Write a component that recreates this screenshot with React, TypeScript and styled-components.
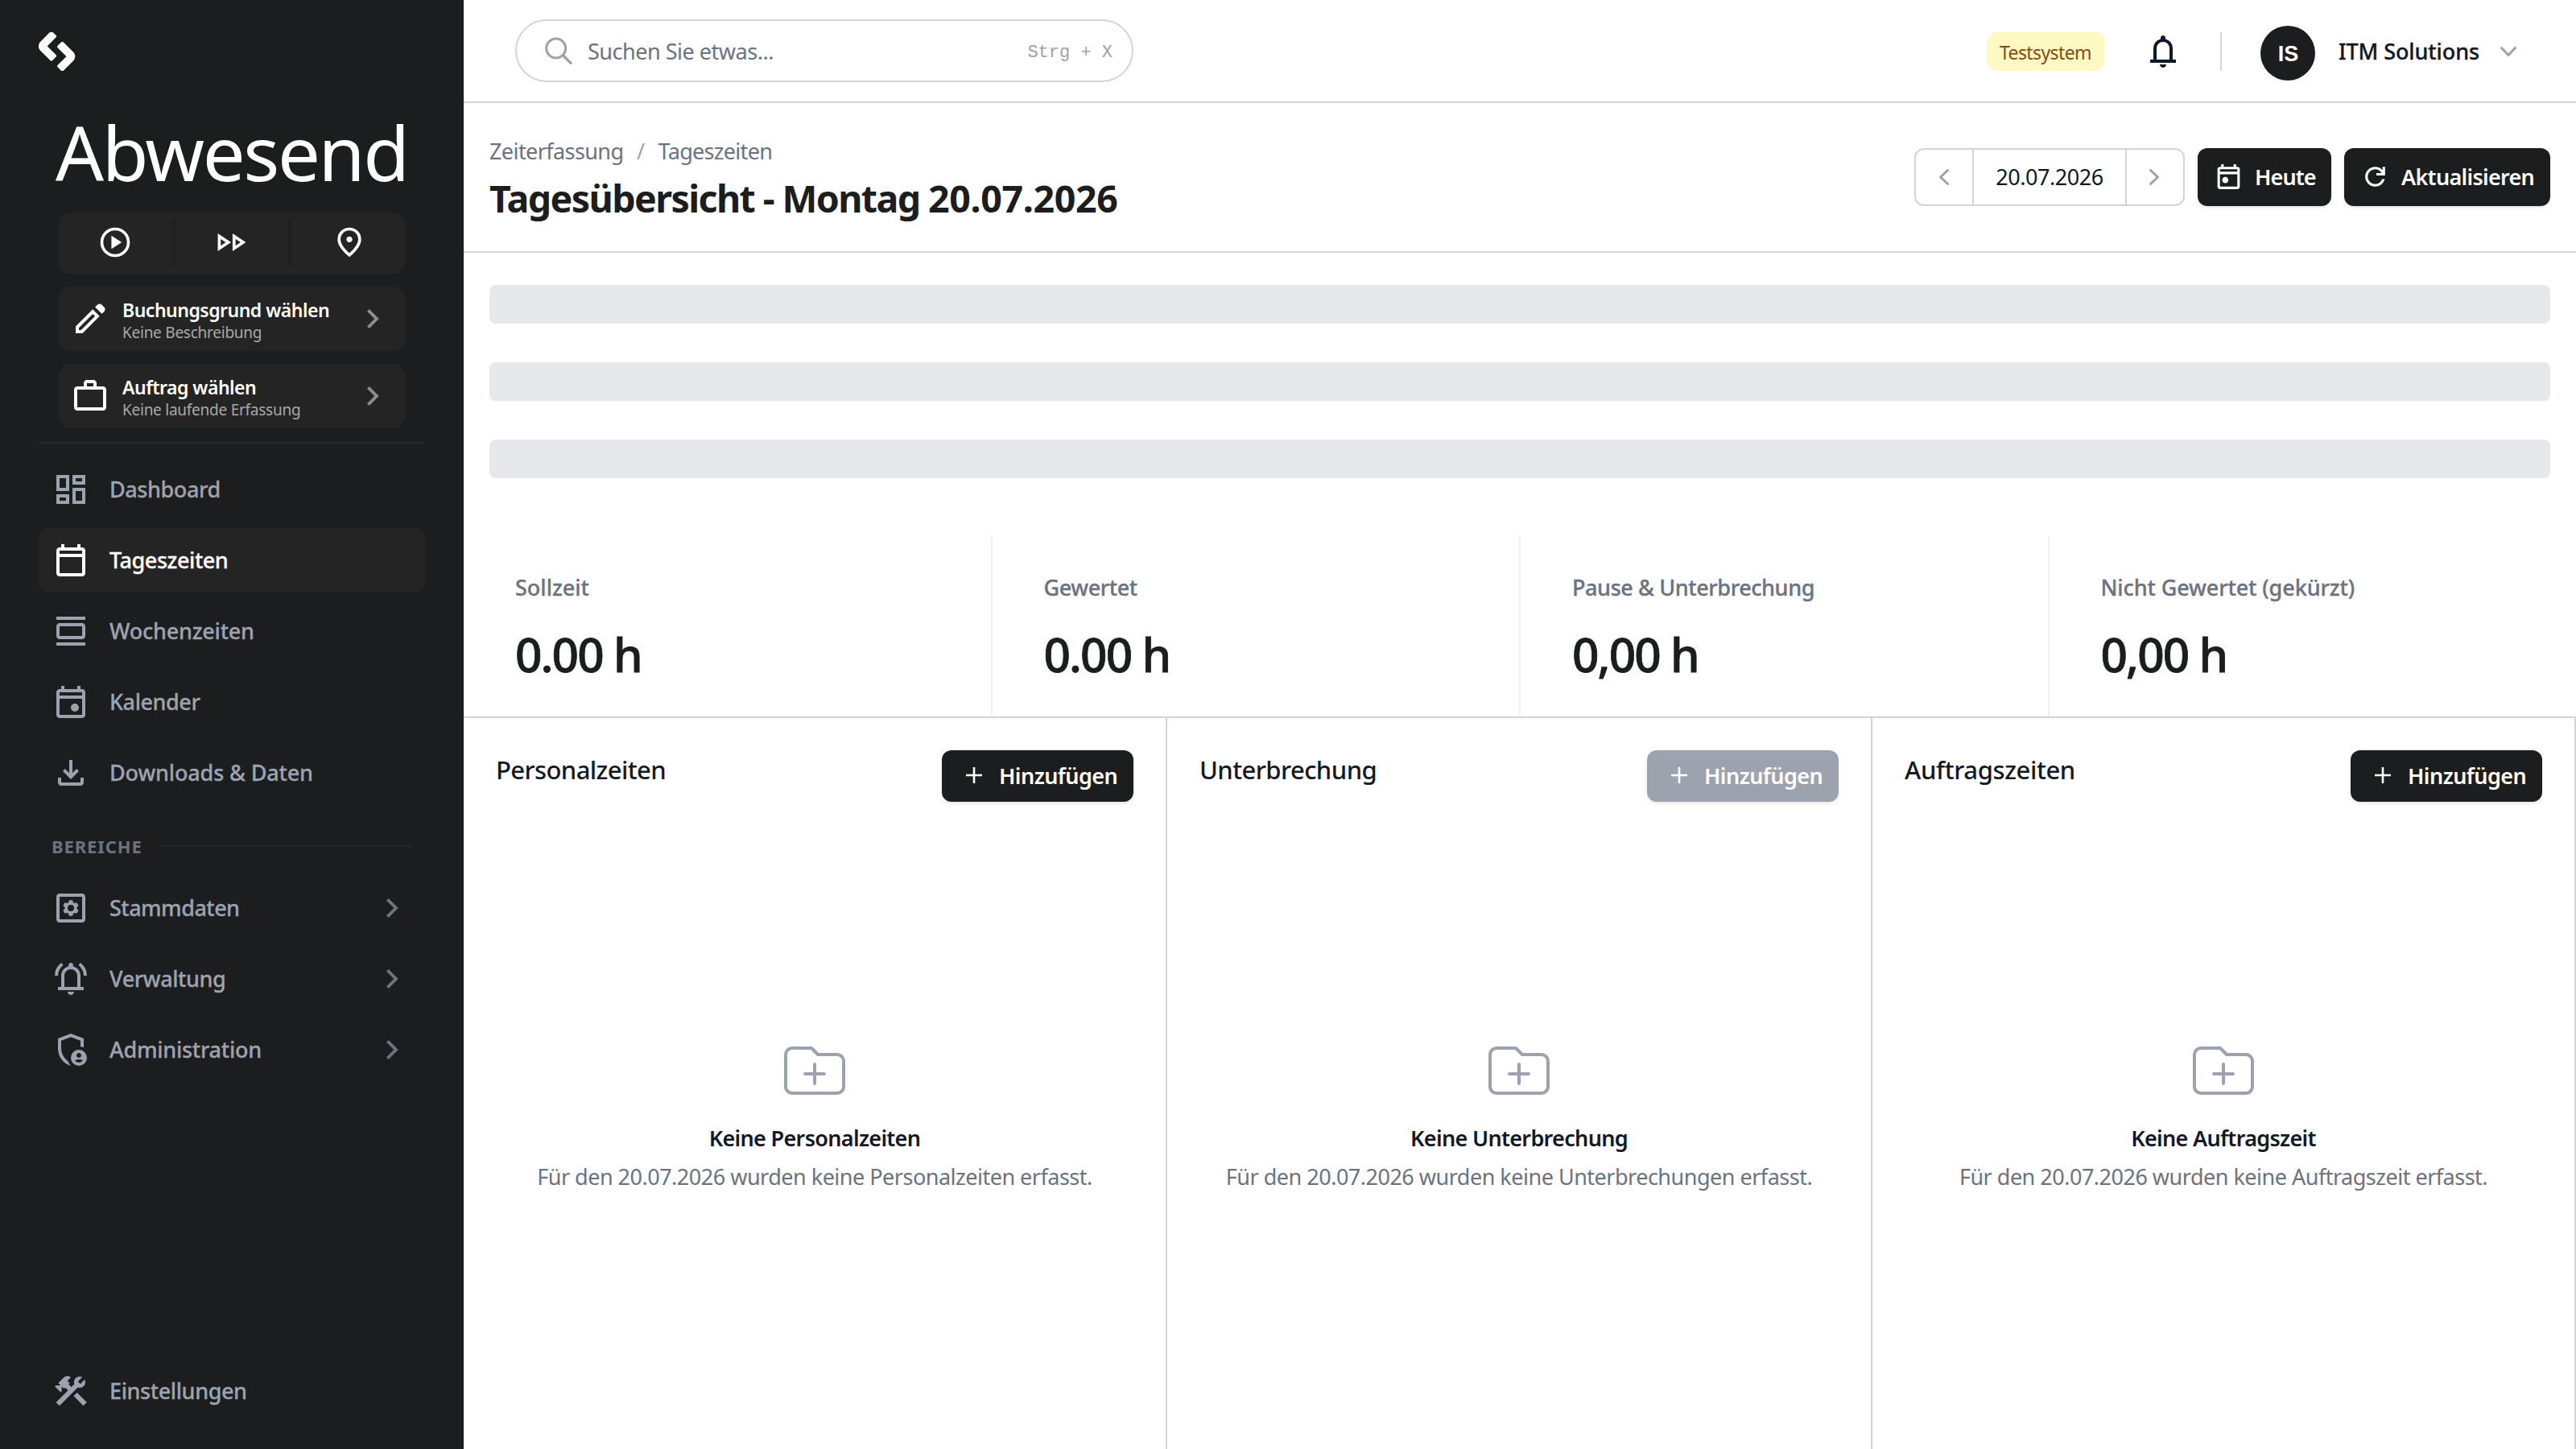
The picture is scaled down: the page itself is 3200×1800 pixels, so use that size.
import React from "react";
import styled, { createGlobalStyle, css } from "styled-components";
import { MdConstruction, MdOutlineDashboard } from "react-icons/md";

const ink = "#1b1d1e";
const panel = "#242424";
const line = "#d4d4d8";
const muted = "#9ca3af";
const body = "#6b7280";
const text = "#111827";

const GlobalStyle = createGlobalStyle`
  * { box-sizing: border-box; }
  body {
    margin: 0;
    background: #fff;
    color: ${text};
    font-family: "Noto Sans", "Open Sans", sans-serif;
    font-size: 27px;
    line-height: 40px;
  }
  svg { display: block; flex: none; }
`;

/* ---------- icons ---------- */

const icons = {
  day: "M5 22q-.825 0-1.413-.587Q3 20.825 3 20V6q0-.825.587-1.412Q4.175 4 5 4h1V2h2v2h8V2h2v2h1q.825 0 1.413.588Q21 5.175 21 6v14q0 .825-.587 1.413Q19.825 22 19 22Zm0-2h14V10H5v10ZM5 8h14V6H5v2Z",
  event:
    "M14.5 18q-1.05 0-1.775-.725Q12 16.55 12 15.5q0-1.05.725-1.775Q13.45 13 14.5 13q1.05 0 1.775.725Q17 14.45 17 15.5q0 1.05-.725 1.775Q15.55 18 14.5 18ZM5 22q-.825 0-1.413-.587Q3 20.825 3 20V6q0-.825.587-1.412Q4.175 4 5 4h1V2h2v2h8V2h2v2h1q.825 0 1.413.588Q21 5.175 21 6v14q0 .825-.587 1.413Q19.825 22 19 22Zm0-2h14V10H5v10ZM5 8h14V6H5v2Z",
  today:
    "M9.3 17.2q-1.05 0-1.775-.725Q6.8 15.75 6.8 14.7q0-1.05.725-1.775Q8.25 12.2 9.3 12.2q1.05 0 1.775.725.725.725.725 1.775 0 1.05-.725 1.775-.725.725-1.775.725ZM5 22q-.825 0-1.413-.587Q3 20.825 3 20V6q0-.825.587-1.412Q4.175 4 5 4h1V2h2v2h8V2h2v2h1q.825 0 1.413.588Q21 5.175 21 6v14q0 .825-.587 1.413Q19.825 22 19 22Zm0-2h14V10H5v10ZM5 8h14V6H5v2Z",
  week: "M3 5V3h18v2Zm0 16v-2h18v2Zm2-4q-.825 0-1.413-.587Q3 15.825 3 15V9q0-.825.587-1.412Q4.175 7 5 7h14q.825 0 1.413.588Q21 8.175 21 9v6q0 .825-.587 1.413Q19.825 17 19 17Zm0-2h14V9H5v6Z",
  download:
    "M12 16 7 11l1.4-1.45 2.6 2.6V4h2v8.15l2.6-2.6L17 11ZM6 20q-.825 0-1.413-.587Q4 18.825 4 18v-3h2v3h12v-3h2v3q0 .825-.587 1.413Q18.825 20 18 20Z",
  bell: "M4 19v-2h2v-7q0-2.075 1.25-3.688Q8.5 4.7 10.5 4.2v-.7q0-.625.438-1.062Q11.375 2 12 2t1.062.438q.438.437.438 1.062v.7q2 .5 3.25 2.112Q18 7.925 18 10v7h2v2Zm8 3q-.825 0-1.412-.587Q10 20.825 10 20h4q0 .825-.587 1.413Q12.825 22 12 22Zm-4-5h8v-7q0-1.65-1.175-2.825Q13.65 6 12 6q-1.65 0-2.825 1.175Q8 8.35 8 10Z",
  bellActive:
    "M2 10q0-2.5 1.113-4.588Q4.225 3.325 6.1 1.95l1.175 1.6q-1.5 1.1-2.387 2.775Q4 8 4 10Zm18 0q0-2-.887-3.675-.888-1.675-2.388-2.775l1.175-1.6q1.875 1.375 2.988 3.462Q22 7.5 22 10ZM4 19v-2h2v-7q0-2.075 1.25-3.688Q8.5 4.7 10.5 4.2v-.7q0-.625.438-1.062Q11.375 2 12 2t1.062.438q.438.437.438 1.062v.7q2 .5 3.25 2.112Q18 7.925 18 10v7h2v2Zm8 3q-.825 0-1.412-.587Q10 20.825 10 20h4q0 .825-.587 1.413Q12.825 22 12 22Zm-4-5h8v-7q0-1.65-1.175-2.825Q13.65 6 12 6q-1.65 0-2.825 1.175Q8 8.35 8 10Z",
  admin:
    "M17 17q.625 0 1.062-.438.438-.437.438-1.062t-.438-1.062Q17.625 14 17 14t-1.062.438q-.438.437-.438 1.062t.438 1.062Q16.375 17 17 17Zm0 3q.775 0 1.425-.363.65-.362 1.05-.962-.55-.325-1.175-.5T17 18t-1.3.175q-.625.175-1.175.5.4.6 1.05.962Q16.225 20 17 20Zm-5 2q-3.475-.875-5.737-3.988Q4 14.9 4 11.1V5l8-3 8 3v5.675q-.475-.2-.975-.363-.5-.162-1.025-.237V6.4l-6-2.25L6 6.4v4.7q0 1.175.312 2.337.313 1.163.875 2.238.563 1.075 1.363 1.987.8.913 1.775 1.538.275.8.725 1.525.45.725 1.025 1.275-.025 0-.038.013Q12.025 22 12 22Zm5 0q-2.075 0-3.537-1.462Q12 19.075 12 17q0-2.075 1.463-3.538Q14.925 12 17 12t3.538 1.462Q22 14.925 22 17q0 2.075-1.462 3.538Q19.075 22 17 22Z",
  play: "m9.5 16.5 7-4.5-7-4.5ZM12 22q-2.075 0-3.9-.788-1.825-.787-3.175-2.137-1.35-1.35-2.137-3.175Q2 14.075 2 12t.788-3.9q.787-1.825 2.137-3.175 1.35-1.35 3.175-2.138Q9.925 2 12 2t3.9.787q1.825.788 3.175 2.138 1.35 1.35 2.137 3.175Q22 9.925 22 12t-.788 3.9q-.787 1.825-2.137 3.175-1.35 1.35-3.175 2.137Q14.075 22 12 22Zm0-2q3.35 0 5.675-2.325Q20 15.35 20 12q0-3.35-2.325-5.675Q15.35 4 12 4 8.65 4 6.325 6.325 4 8.65 4 12q0 3.35 2.325 5.675Q8.65 20 12 20Z",
  forward: "M2.5 18V6l9 6Zm10 0V6l9 6Zm-8-3.75L7.9 12 4.5 9.75Zm10 0L17.9 12l-3.4-2.25Z",
  pin: "M12 12q.825 0 1.413-.588Q14 10.825 14 10t-.587-1.413Q12.825 8 12 8q-.825 0-1.412.587Q10 9.175 10 10q0 .825.588 1.412Q11.175 12 12 12Zm0 7.35q3.05-2.8 4.525-5.088Q18 11.975 18 10.2q0-2.725-1.738-4.463Q14.525 4 12 4 9.475 4 7.737 5.737 6 7.475 6 10.2q0 1.775 1.475 4.062Q8.95 16.55 12 19.35ZM12 22q-4.025-3.425-6.012-6.363Q4 12.7 4 10.2q0-3.75 2.413-5.975Q8.825 2 12 2t5.587 2.225Q20 6.45 20 10.2q0 2.5-1.987 5.437Q16.025 18.575 12 22Z",
  edit: "M5 19h1.4l8.625-8.625-1.4-1.4L5 17.6ZM19.3 8.925l-4.25-4.2 1.4-1.4q.575-.575 1.413-.575.837 0 1.412.575l1.4 1.4q.575.575.6 1.388.025.812-.55 1.387ZM17.85 10.4 7.25 21H3v-4.25l10.6-10.6Z",
  work: "M4 21q-.825 0-1.412-.587Q2 19.825 2 19V8q0-.825.588-1.412Q3.175 6 4 6h4V4q0-.825.588-1.413Q9.175 2 10 2h4q.825 0 1.413.587Q16 3.175 16 4v2h4q.825 0 1.413.588Q22 7.175 22 8v11q0 .825-.587 1.413Q20.825 21 20 21Zm0-2h16V8H4v11Zm6-13h4V4h-4Z",
  chevron: "M9.4 18 8 16.6l4.6-4.6L8 7.4 9.4 6l6 6Z",
  refresh:
    "M12 20q-3.35 0-5.675-2.325T4 12t2.325-5.675T12 4q1.725 0 3.3.713T18 6.75V4h2v7h-7V9h4.2q-.8-1.4-2.187-2.2T12 6Q9.5 6 7.75 7.75T6 12t1.75 4.25T12 18q1.925 0 3.475-1.1T17.65 14h2.1q-.7 2.65-2.85 4.325T12 20",
};

type IconName = keyof typeof icons;

const Icon = ({ name, size = 48 }: { name: IconName; size?: number }) => (
  <svg width={size} height={size} viewBox="0 0 24 24" fill="currentColor">
    <path fillRule="evenodd" d={icons[name]} />
  </svg>
);

/* Six-toothed gear outline centred on (12, 12). */
const gear =
  "M" +
  Array.from({ length: 6 }, (_, k) =>
    [
      [-24, 3.75],
      [-12, 5],
      [12, 5],
      [24, 3.75],
    ]
      .map(([offset, r]) => {
        const a = ((k * 60 + offset) * Math.PI) / 180;
        return `${(12 + r * Math.sin(a)).toFixed(2)} ${(12 - r * Math.cos(a)).toFixed(2)}`;
      })
      .join("L")
  ).join("L") +
  "Z";

const MasterDataIcon = () => (
  <svg width={48} height={48} viewBox="0 0 24 24" fill="currentColor">
    <path
      fillRule="evenodd"
      d="M5 21q-.825 0-1.413-.587Q3 19.825 3 19V5q0-.825.587-1.413Q4.175 3 5 3h14q.825 0 1.413.587Q21 4.175 21 5v14q0 .825-.587 1.413Q19.825 21 19 21Zm0-2h14V5H5Z"
    />
    <path fillRule="evenodd" d={`${gear}M12 10a2 2 0 100 4 2 2 0 000-4Z`} />
  </svg>
);

const arrows = {
  down: "M5.23 7.21a.75.75 0 011.06.02L10 11.168l3.71-3.938a.75.75 0 111.08 1.04l-4.25 4.5a.75.75 0 01-1.08 0l-4.25-4.5a.75.75 0 01.02-1.06z",
  left: "M12.79 5.23a.75.75 0 01-.02 1.06L8.832 10l3.938 3.71a.75.75 0 11-1.04 1.08l-4.5-4.25a.75.75 0 010-1.08l4.5-4.25a.75.75 0 011.06.02z",
  right:
    "M7.21 14.77a.75.75 0 01.02-1.06L11.168 10 7.23 6.29a.75.75 0 111.04-1.08l4.5 4.25a.75.75 0 010 1.08l-4.5 4.25a.75.75 0 01-1.06-.02z",
};

const Arrow = ({ to }: { to: keyof typeof arrows }) => (
  <svg width={40} height={40} viewBox="0 0 20 20" fill={muted}>
    <path fillRule="evenodd" clipRule="evenodd" d={arrows[to]} />
  </svg>
);

const Logo = () => {
  const half = "M15.8 1 20 5.2 7.9 17.3 20 29.4 15.8 33.6 3.2 21Q.6 17.3 3.2 13.6Z";
  return (
    <svg width={46} height={48} viewBox="0 0 46 48">
      <g fill="#fff" stroke="#fff" strokeWidth={4} strokeLinejoin="round">
        <path d={half} />
        <path d={half} transform="rotate(180 22.6 23.7)" />
      </g>
    </svg>
  );
};

const SearchIcon = () => (
  <svg width={40} height={40} viewBox="0 0 40 40" fill="none" stroke={muted}>
    <circle cx={18.7} cy={17} r={12} strokeWidth={3} />
    <path d="M28.4 26.8 37 35.4" strokeWidth={3.4} strokeLinecap="round" />
  </svg>
);

const PlusIcon = () => (
  <svg width={22} height={22} viewBox="0 0 22 22" stroke="currentColor" strokeWidth={2.6}>
    <path d="M11 1v20M1 11h20" />
  </svg>
);

const FolderPlus = () => (
  <svg width={96} height={96} viewBox="0 0 24 24" fill="none" stroke={muted} strokeWidth={1}>
    <path
      strokeLinecap="round"
      strokeLinejoin="round"
      d="M9 13h6m-3-3v6m-9 1V7a2 2 0 012-2h6l2 2h6a2 2 0 012 2v8a2 2 0 01-2 2H5a2 2 0 01-2-2z"
    />
  </svg>
);

/* ---------- shared ---------- */

const Label = styled.span<{ $track?: number }>`
  letter-spacing: ${(p) => p.$track ?? 0}px;
  white-space: nowrap;
`;

const Page = styled.div`
  display: grid;
  grid-template-columns: 576px 1fr;
  width: 3200px;
  height: 1800px;
  overflow: hidden;
`;

/* ---------- sidebar ---------- */

const Sidebar = styled.aside`
  display: flex;
  flex-direction: column;
  padding: 40px 48px 32px;
  background: ${ink};
  color: ${muted};
`;

const Terminal = styled.section`
  display: flex;
  flex-direction: column;
  gap: 16px;
  margin-top: 53px;
  padding: 0 24px 16px;
  color: #fff;
`;

const Status = styled.div`
  margin: 0 0 11px -3px;
  font-size: 94px;
  line-height: 96px;
  letter-spacing: -2.4px;
  white-space: nowrap;
`;

const Controls = styled.div`
  display: grid;
  grid-template-columns: 142px 144px 1fr;
  height: 76px;
  padding: 8px 0 10px;
  border-radius: 16px;
  background: ${panel};
`;

const Control = styled.button`
  display: flex;
  align-items: center;
  justify-content: center;
  padding: 0;
  border: 0;
  background: none;
  color: #fff;

  & + & {
    border-left: 4px solid #1f2020;
  }

  &:last-child {
    padding-left: 2px;
  }
`;

const Picker = styled.button`
  display: flex;
  align-items: center;
  gap: 16px;
  height: 80px;
  padding: 0 16px;
  border: 0;
  border-radius: 16px;
  background: ${panel};
  color: #fff;
  font-family: inherit;
  text-align: left;

  svg:last-child {
    color: #8c8c8c;
  }
`;

const PickerText = styled.span`
  display: flex;
  flex: 1;
  flex-direction: column;
  padding-top: 3px;
`;

const PickerTitle = styled.span`
  font-size: 23px;
  font-weight: 600;
  line-height: 30px;
  letter-spacing: -0.5px;
`;

const PickerHint = styled.span`
  color: #a9a9a9;
  font-size: 19px;
  line-height: 26px;
  letter-spacing: -0.25px;
`;

const Divider = styled.hr`
  width: 100%;
  height: 4px;
  margin: 0;
  border: 0;
  background: #242526;
`;

const Nav = styled.nav<{ $top?: number }>`
  display: flex;
  flex-direction: column;
  gap: 8px;
  margin-top: ${(p) => p.$top ?? 0}px;
`;

const NavItem = styled.a<{ $active?: boolean }>`
  display: flex;
  align-items: center;
  gap: 24px;
  height: 80px;
  padding: 0 16px;
  border-radius: 12px;
  font-weight: 500;

  ${Label} {
    flex: 1;
    -webkit-text-stroke: 0.3px currentColor;
  }

  svg:nth-child(3) {
    color: ${body};
  }

  ${(p) =>
    p.$active &&
    css`
      background: ${panel};
      color: #fff;
    `}
`;

const SectionTitle = styled.div`
  display: flex;
  align-items: center;
  gap: 19px;
  margin-top: 31px;
  padding: 0 16px;
  color: ${body};
  font-size: 22px;
  font-weight: 700;
  letter-spacing: 0.9px;

  &::after {
    content: "";
    flex: 1;
    height: 2px;
    background: #242526;
  }
`;

const Spacer = styled.div`
  flex: 1;
`;

/* ---------- main ---------- */

const Main = styled.main`
  display: flex;
  flex-direction: column;
  min-width: 0;
`;

const TopBar = styled.header`
  display: flex;
  align-items: center;
  height: 128px;
  padding: 0 64px;
  border-bottom: 2px solid ${line};
`;

const Search = styled.div`
  display: flex;
  align-items: center;
  width: 768px;
  height: 78px;
  padding: 0 24px 0 30px;
  border: 2px solid ${line};
  border-radius: 39px;
  color: ${body};

  ${Label} {
    flex: 1;
    margin: 2px 0 0 18px;
  }
`;

const Shortcut = styled.kbd`
  margin-top: 5px;
  color: ${muted};
  font: 22px/40px "Liberation Mono", monospace;
`;

const Account = styled.div`
  display: flex;
  align-items: center;
  height: 72px;
  padding-top: 2px;
  margin-left: auto;
`;

const Badge = styled.span`
  display: flex;
  align-items: center;
  width: 146px;
  height: 48px;
  padding: 2px 0 0 16px;
  margin-right: 49px;
  border-radius: 12px;
  background: #fef9c3;
  color: #854d0e;
  font-size: 23px;
`;

const Separator = styled.span`
  width: 2px;
  height: 48px;
  margin: 0 48px 0 47px;
  background: ${line};
`;

const Avatar = styled.span`
  display: flex;
  align-items: center;
  justify-content: center;
  width: 68px;
  height: 68px;
  padding: 2px 0 0 1px;
  margin: 4px 29px 0 0;
  border-radius: 50%;
  background: ${ink};
  color: #fff;
  font: bold 27px/40px "Liberation Sans", sans-serif;
`;

const UserName = styled.span`
  width: 191px;
  font-weight: 500;
  letter-spacing: -0.1px;
  -webkit-text-stroke: 0.3px currentColor;
`;

const PageHeader = styled.div`
  display: flex;
  align-items: center;
  justify-content: space-between;
  height: 186px;
  padding: 0 32px;
  border-bottom: 2px solid ${line};
`;

const Heading = styled.div`
  padding-bottom: 4px;
  margin-top: 16px;
`;

const Breadcrumb = styled.div`
  display: flex;
  color: ${body};
  gap: 16.5px;
`;

const Slash = styled.span`
  color: ${muted};
`;

const Title = styled.h1`
  margin: 0;
  color: ${ink};
  font-size: 46.5px;
  font-weight: 700;
  line-height: 76px;
`;

const Actions = styled.div`
  display: flex;
  gap: 16px;
`;

const DateSwitch = styled.div`
  display: grid;
  grid-template-columns: 70px 190px 72px;
  height: 72px;
  border: 2px solid ${line};
  border-radius: 12px;
`;

const DateCell = styled.span`
  display: flex;
  align-items: center;
  justify-content: center;

  & + & {
    border-left: 2px solid ${line};
  }

  &:last-child {
    padding-right: 2px;
  }
`;

const Button = styled.button<{ $width: number; $small?: boolean; $disabled?: boolean }>`
  display: flex;
  align-items: center;
  width: ${(p) => p.$width}px;
  height: ${(p) => (p.$small ? 64 : 72)}px;
  gap: ${(p) => (p.$small ? 20 : 14)}px;
  padding: 0 0 2px ${(p) => (p.$small ? 29 : 20)}px;
  border: 0;
  border-radius: 12px;
  background: ${(p) => (p.$disabled ? muted : ink)};
  box-shadow: 0 2px 4px rgba(0, 0, 0, 0.1);
  color: #fff;
  font: 600 27px/40px "Noto Sans", sans-serif;

  ${Label} {
    padding-top: 2px;
  }
`;

const Skeletons = styled.div`
  display: flex;
  flex-direction: column;
  gap: 48px;
  padding: 40px 32px 72px;
`;

const Skeleton = styled.div`
  height: 48px;
  border-radius: 8px;
  background: #e6e8eb;
`;

const Stats = styled.div`
  display: grid;
  grid-template-columns: repeat(4, 1fr);
  gap: 2px;
  height: 226px;
  border-bottom: 2px solid ${line};
  background: #f0f0f2;
`;

const Stat = styled.div`
  padding: 44px 64px 0;
  background: #fff;
  color: ${body};
  font-weight: 500;
  -webkit-text-stroke: 0.3px currentColor;
`;

const StatValue = styled.div`
  margin-top: 22px;
  color: ${ink};
  font-size: 58.5px;
  font-weight: 500;
  line-height: 80px;
  letter-spacing: -1.9px;
  -webkit-text-stroke: 0.8px currentColor;
`;

const Columns = styled.div`
  display: grid;
  flex: 1;
  grid-template-columns: 874px 876px 874px;
`;

const Column = styled.section`
  border-right: 2px solid ${line};
`;

const ColumnHeader = styled.div`
  display: flex;
  align-items: flex-start;
  justify-content: space-between;
  padding: 40px 40px 0;
`;

const ColumnTitle = styled.h2`
  margin: 0;
  font-size: 31px;
  font-weight: 500;
  line-height: 48px;
`;

const Empty = styled.div`
  display: flex;
  flex-direction: column;
  align-items: center;
  margin-top: 286px;
`;

const EmptyTitle = styled.h3`
  margin: 16px 0 8px;
  font-size: 27px;
  font-weight: 600;
  letter-spacing: -0.68px;
`;

const EmptyText = styled.p`
  margin: 0;
  color: ${body};
  letter-spacing: -0.5px;
`;

/* ---------- data ---------- */

const mainNav = [
  { label: "Dashboard", track: -0.42, icon: <MdOutlineDashboard size={48} /> },
  { label: "Tageszeiten", track: -0.45, icon: <Icon name="day" />, active: true },
  { label: "Wochenzeiten", track: -0.22, icon: <Icon name="week" /> },
  { label: "Kalender", track: -0.44, icon: <Icon name="event" /> },
  { label: "Downloads & Daten", track: -0.15, icon: <Icon name="download" /> },
];

const areaNav = [
  { label: "Stammdaten", track: -0.52, icon: <MasterDataIcon /> },
  { label: "Verwaltung", track: -0.4, icon: <Icon name="bellActive" /> },
  { label: "Administration", track: -0.25, icon: <Icon name="admin" /> },
];

const stats = [
  { label: "Sollzeit", track: 0, value: "0.00 h" },
  { label: "Gewertet", track: -0.4, value: "0.00 h" },
  { label: "Pause & Unterbrechung", track: -0.4, value: "0,00 h" },
  { label: "Nicht Gewertet (gekürzt)", track: -0.1, value: "0,00 h" },
];

const columns = [
  { title: "Personalzeiten", track: -0.6, empty: "Keine Personalzeiten", noun: "Personalzeiten" },
  { title: "Unterbrechung", track: -0.55, empty: "Keine Unterbrechung", noun: "Unterbrechungen", disabled: true },
  { title: "Auftragszeiten", track: -0.38, empty: "Keine Auftragszeit", noun: "Auftragszeit" },
];

export default function App() {
  return (
    <Page>
      <GlobalStyle />
      <Sidebar>
        <Logo />
        <Terminal>
          <Status>Abwesend</Status>
          <Controls>
            <Control><Icon name="play" size={44} /></Control>
            <Control><Icon name="forward" size={44} /></Control>
            <Control><Icon name="pin" size={44} /></Control>
          </Controls>
          <Picker>
            <Icon name="edit" />
            <PickerText>
              <PickerTitle>Buchungsgrund wählen</PickerTitle>
              <PickerHint>Keine Beschreibung</PickerHint>
            </PickerText>
            <Icon name="chevron" />
          </Picker>
          <Picker>
            <Icon name="work" />
            <PickerText>
              <PickerTitle>Auftrag wählen</PickerTitle>
              <PickerHint>Keine laufende Erfassung</PickerHint>
            </PickerText>
            <Icon name="chevron" />
          </Picker>
        </Terminal>
        <Divider />
        <Nav $top={16}>
          {mainNav.map((item) => (
            <NavItem key={item.label} $active={item.active}>
              {item.icon}
              <Label $track={item.track}>{item.label}</Label>
            </NavItem>
          ))}
        </Nav>
        <SectionTitle>BEREICHE</SectionTitle>
        <Nav $top={17}>
          {areaNav.map((item) => (
            <NavItem key={item.label}>
              {item.icon}
              <Label $track={item.track}>{item.label}</Label>
              <Icon name="chevron" />
            </NavItem>
          ))}
        </Nav>
        <Spacer />
        <NavItem>
          <MdConstruction size={48} />
          <Label $track={-0.4}>Einstellungen</Label>
        </NavItem>
      </Sidebar>

      <Main>
        <TopBar>
          <Search>
            <SearchIcon />
            <Label $track={-0.48}>Suchen Sie etwas...</Label>
            <Shortcut>Strg + X</Shortcut>
          </Search>
          <Account>
            <Badge><Label $track={-0.6}>Testsystem</Label></Badge>
            <Icon name="bell" />
            <Separator />
            <Avatar>IS</Avatar>
            <UserName>ITM Solutions</UserName>
            <Arrow to="down" />
          </Account>
        </TopBar>

        <PageHeader>
          <Heading>
            <Breadcrumb>
              <Label $track={-0.58}>Zeiterfassung</Label>
              <Slash>/</Slash>
              <Label $track={-0.7}>Tageszeiten</Label>
            </Breadcrumb>
            <Title>
              <Label $track={-1.58}>Tagesübersicht - Montag </Label>
              <Label $track={-0.35}>20.07.2026</Label>
            </Title>
          </Heading>
          <Actions>
            <DateSwitch>
              <DateCell><Arrow to="left" /></DateCell>
              <DateCell><Label $track={-0.45}>20.07.2026</Label></DateCell>
              <DateCell><Arrow to="right" /></DateCell>
            </DateSwitch>
            <Button $width={166}>
              <Icon name="today" size={37} />
              <Label $track={-0.9}>Heute</Label>
            </Button>
            <Button $width={256}>
              <Icon name="refresh" size={37} />
              <Label $track={-0.7}>Aktualisieren</Label>
            </Button>
          </Actions>
        </PageHeader>

        <Skeletons>
          <Skeleton />
          <Skeleton />
          <Skeleton />
        </Skeletons>

        <Stats>
          {stats.map((s) => (
            <Stat key={s.label}>
              <Label $track={s.track}>{s.label}</Label>
              <StatValue>{s.value}</StatValue>
            </Stat>
          ))}
        </Stats>

        <Columns>
          {columns.map((c) => (
            <Column key={c.title}>
              <ColumnHeader>
                <ColumnTitle><Label $track={c.track}>{c.title}</Label></ColumnTitle>
                <Button $width={238} $small $disabled={c.disabled}>
                  <PlusIcon />
                  <Label $track={-0.55}>Hinzufügen</Label>
                </Button>
              </ColumnHeader>
              <Empty>
                <FolderPlus />
                <EmptyTitle>{c.empty}</EmptyTitle>
                <EmptyText>Für den 20.07.2026 wurden keine {c.noun} erfasst.</EmptyText>
              </Empty>
            </Column>
          ))}
        </Columns>
      </Main>
    </Page>
  );
}
